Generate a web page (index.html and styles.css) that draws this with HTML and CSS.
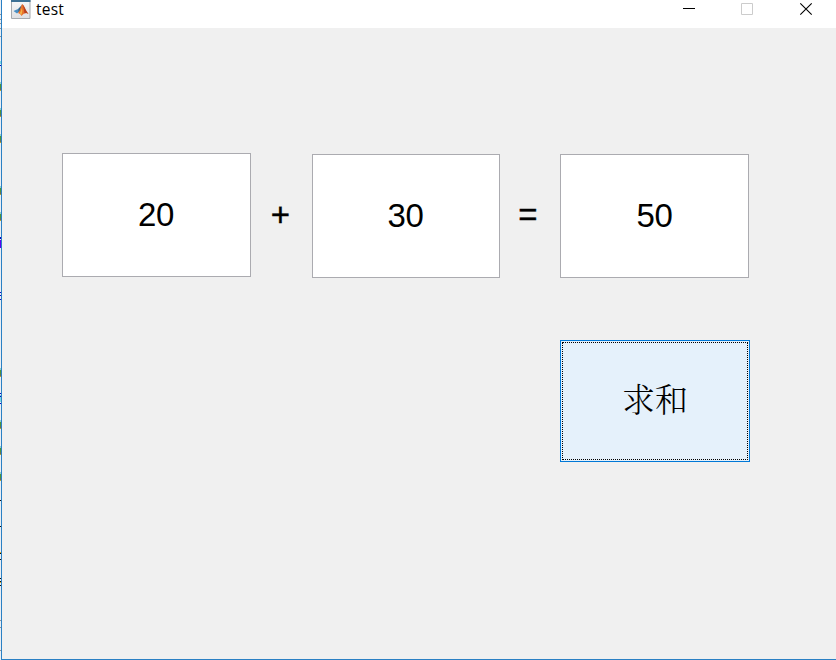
FILE: index.html
```
<!DOCTYPE html>
<html lang="zh-CN">
<head>
<meta charset="utf-8">
<title>test</title>
<link rel="stylesheet" href="styles.css">
</head>
<body>
<div class="desktop">
  <svg class="behind" width="1" height="660" viewBox="0 0 1 660" shape-rendering="crispEdges" aria-hidden="true">
    <defs><g id="mark"><path fill="#8fd0cf" d="M0 0h1v2H0z"/><path fill="#4e9438" d="M0 2h1v4H0z"/><path fill="#6d7053" d="M0 6h1v2H0z"/><path fill="#bca72a" d="M0 8h1v1H0z"/></g></defs>
    <path fill="#e9eef4" d="M0 0h1v660H0z"/>
    <path fill="#8f9499" d="M0 14h1v1H0zM0 19h1v1H0zM0 23h1v1H0zM0 28h1v1H0zM0 36h1v1H0zM0 620h1v1H0zM0 627h1v1H0zM0 650h1v1H0z"/>
    <path fill="#79dbe6" d="M0 61h1v3H0zM0 395h1v7H0z"/>
    <use href="#mark" y="82"/><use href="#mark" y="108"/><use href="#mark" y="134"/>
    <use href="#mark" y="186"/><use href="#mark" y="212"/><use href="#mark" y="368"/>
    <use href="#mark" y="420"/><use href="#mark" y="446"/><use href="#mark" y="472"/>
    <path fill="#0808c0" d="M0 65h1v1H0zM0 237h1v2H0zM0 292h1v1H0zM0 295h1v1H0zM0 299h1v1H0zM0 393h1v1H0zM0 396h1v1H0zM0 403h1v1H0z"/>
    <path fill="#5a00f0" d="M0 240h1v8H0z"/>
    <path fill="#101010" d="M0 500h1v1H0zM0 526h1v1H0zM0 553h1v1H0zM0 559h1v1H0zM0 578h1v1H0zM0 581h1v1H0zM0 585h1v1H0z"/>
    <path fill="#e0b02c" d="M0 552h1v1H0zM0 582h1v1H0z"/>
  </svg>
  <main class="window">
    <header class="titlebar">
      <svg class="logo" width="20" height="19" viewBox="0 0 20 19" aria-hidden="true">
        <defs><linearGradient id="tile" x2="0" y2="1"><stop stop-color="#f8f9fa"/><stop offset="1" stop-color="#dedfe2"/></linearGradient></defs>
        <path fill="url(#tile)" stroke="#a5a9ae" d="M.5-.5h18.500v19H.5z"/>
        <path fill="#3c7094" d="M0 0h19.500v2H0z"/>
        <path fill="#4a8fc4" d="M2.500 11l4.500-2 4-4-2 6-3 2.500z"/>
        <path fill="#34617f" d="M7.500 9l3.500-4-2 6-1.500 1z"/>
        <path fill="#e8702a" d="M11 4c2 1 3 6 6.500 10-3-2-4.500-.5-7 2-1-2-2-2.500-3.500-3C9 11 10 6 11 4z"/>
        <path fill="#b8401f" d="M11.500 4.300c2 1.500 3 6 6 9.700-2-1.300-3-1-4-.5C13 10 12.500 7 11.500 4.300z"/>
        <path fill="#f2b447" d="M10.700 8c.8 2 .8 4-.4 7-.5-1-1-1.500-1.800-1.800 1.200-1.200 1.700-3.200 2.200-5.200z"/>
      </svg>
      <span class="title">test</span>
      <svg class="controls" width="130" height="20" viewBox="0 0 130 20" fill="none" aria-hidden="true">
        <path stroke="#000" d="M0 8.500h12"/>
        <path stroke="#ccc" d="M58.500 3.500h11v11h-11z"/>
        <path stroke="#000" stroke-width="1.100" d="M117.300 3.300l11.400 11.400M128.700 3.300L117.300 14.700"/>
      </svg>
    </header>
    <section class="sum">
      <div class="field first">20</div>
      <span class="op plus">+</span>
      <div class="field second">30</div>
      <span class="op equals">=</span>
      <div class="field result">50</div>
    </section>
    <button class="action" type="button"><span class="focus">求和</span></button>
  </main>
</div>
</body>
</html>
```
FILE: styles.css
```
* { box-sizing: border-box; }
body { margin: 0; overflow: hidden; font-family: "Liberation Sans", sans-serif; color: #000; }
.desktop { display: flex; width: 836px; height: 660px; }
.behind { flex: none; display: block; }
.window {
  flex: 1;
  display: flex;
  flex-direction: column;
  background: #f0f0f0;
  border-left: 1px solid #2a80c4;
  border-bottom: 1px solid #2a80c4;
}
.titlebar { display: flex; align-items: flex-start; height: 28px; padding-left: 9px; background: #fff; }
.logo { flex: none; }
.title { margin-left: 5px; font: 15.5px/18px "Open Sans", "Noto Sans", sans-serif; letter-spacing: 0.25px; }
.controls { margin: 0 23px 0 auto; }
.sum { display: flex; align-items: flex-start; margin: 125px 0 0 60px; height: 125px; }
.field {
  flex: none;
  width: 189px;
  height: 124px;
  padding-right: 1px;
  border: 1px solid #ababb0;
  background: #fff;
  font-size: 33px;
  line-height: 122px;
  text-align: center;
  letter-spacing: -0.4px;
}
.second { width: 188px; margin-top: 1px; }
.result { margin-top: 1px; padding-right: 0; }
.op { flex: none; text-align: center; font-size: 33px; line-height: 124px; -webkit-text-stroke: 0.4px #000; }
.plus { width: 61px; padding-right: 2px; }
.equals { width: 60px; padding-right: 4px; }
.action {
  align-self: flex-start;
  width: 190px;
  height: 122px;
  margin: 62px 0 0 558px;
  padding: 1px;
  border: 1px solid #0078d7;
  border-radius: 0;
  background: #e5f1fb;
  color: #000;
}
.focus {
  display: block;
  height: 118px;
  border: 1px dotted #000;
  font: 300 33px/110px "Noto Serif CJK SC", "Noto Sans CJK SC", serif;
}
```
